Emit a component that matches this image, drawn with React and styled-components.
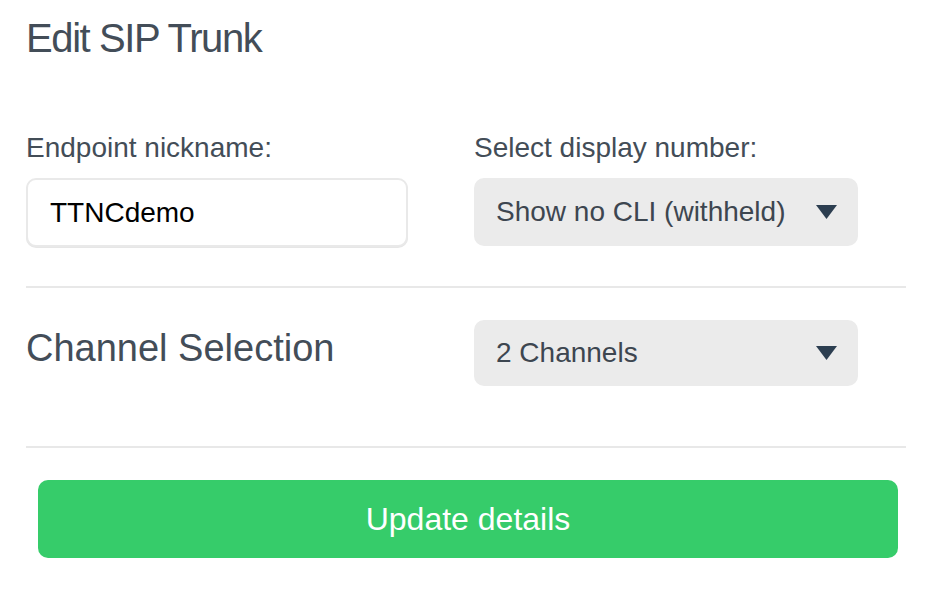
import React from 'react';
import styled, { createGlobalStyle } from 'styled-components';

const GlobalStyle = createGlobalStyle`
  body {
    margin: 0;
    background: #fff;
    font-family: 'Liberation Sans', Arial, sans-serif;
  }
`;

const Container = styled.div`
  width: 880px;
  padding: 16px 0 0 26px;
`;

const Title = styled.h1`
  margin: 0;
  font-size: 40px;
  line-height: 44px;
  font-weight: 400;
  letter-spacing: -1.4px;
  color: #434d58;
`;

const FieldRow = styled.div`
  display: grid;
  grid-template-columns: 382px 384px;
  column-gap: 66px;
  align-items: start;
  margin-top: ${(p) => p.$top || 0}px;
`;

const Field = styled.div`
  display: flex;
  flex-direction: column;
  gap: 14px;
`;

const Label = styled.label`
  font-size: 28px;
  line-height: 32px;
  color: #434d57;
`;

const TextInput = styled.input`
  box-sizing: border-box;
  width: 100%;
  height: 69px;
  padding: 0 22px;
  border: 2px solid #e9e9e9;
  border-radius: 10px;
  box-shadow: 0 1px 0 #e6e6e6;
  font-family: 'Liberation Sans', Arial, sans-serif;
  font-size: 28px;
  color: #000;
  outline: none;
`;

const SelectBox = styled.div`
  box-sizing: border-box;
  height: ${(p) => p.$height || 68}px;
  padding: 0 21px 0 22px;
  display: flex;
  align-items: center;
  justify-content: space-between;
  background: #ebebeb;
  border-radius: 10px;
  font-size: 28px;
  color: #3d4650;
`;

const Section = styled.h2`
  margin: 6px 0 0;
  font-size: 38px;
  line-height: 44px;
  font-weight: 400;
  color: #434d58;
`;

const Divider = styled.hr`
  margin: ${(p) => p.$top}px 0 0;
  border: 0;
  height: 2px;
  background: #e8e8e8;
`;

const Button = styled.button`
  display: block;
  width: 860px;
  height: 78px;
  margin: 32px 0 0 12px;
  border: 0;
  border-radius: 10px;
  background: #36cc6a;
  color: #fff;
  font-family: 'Liberation Sans', Arial, sans-serif;
  font-size: 32px;
  cursor: pointer;
`;

const Caret = () => (
  <svg width="21" height="14" viewBox="0 0 21 14">
    <path d="M0 0 H21 L10.5 14 Z" fill="#2c3e50" />
  </svg>
);

const Select = ({ value, height }) => (
  <SelectBox $height={height}>
    <span>{value}</span>
    <Caret />
  </SelectBox>
);

export default function App() {
  return (
    <>
      <GlobalStyle />
      <Container>
        <Title>Edit SIP Trunk</Title>
        <FieldRow $top={72}>
          <Field>
            <Label>Endpoint nickname:</Label>
            <TextInput defaultValue="TTNCdemo" />
          </Field>
          <Field>
            <Label>Select display number:</Label>
            <Select value="Show no CLI (withheld)" />
          </Field>
        </FieldRow>
        <Divider $top={39} />
        <FieldRow $top={32}>
          <Section>Channel Selection</Section>
          <Select value="2 Channels" height={66} />
        </FieldRow>
        <Divider $top={60} />
        <Button>Update details</Button>
      </Container>
    </>
  );
}
